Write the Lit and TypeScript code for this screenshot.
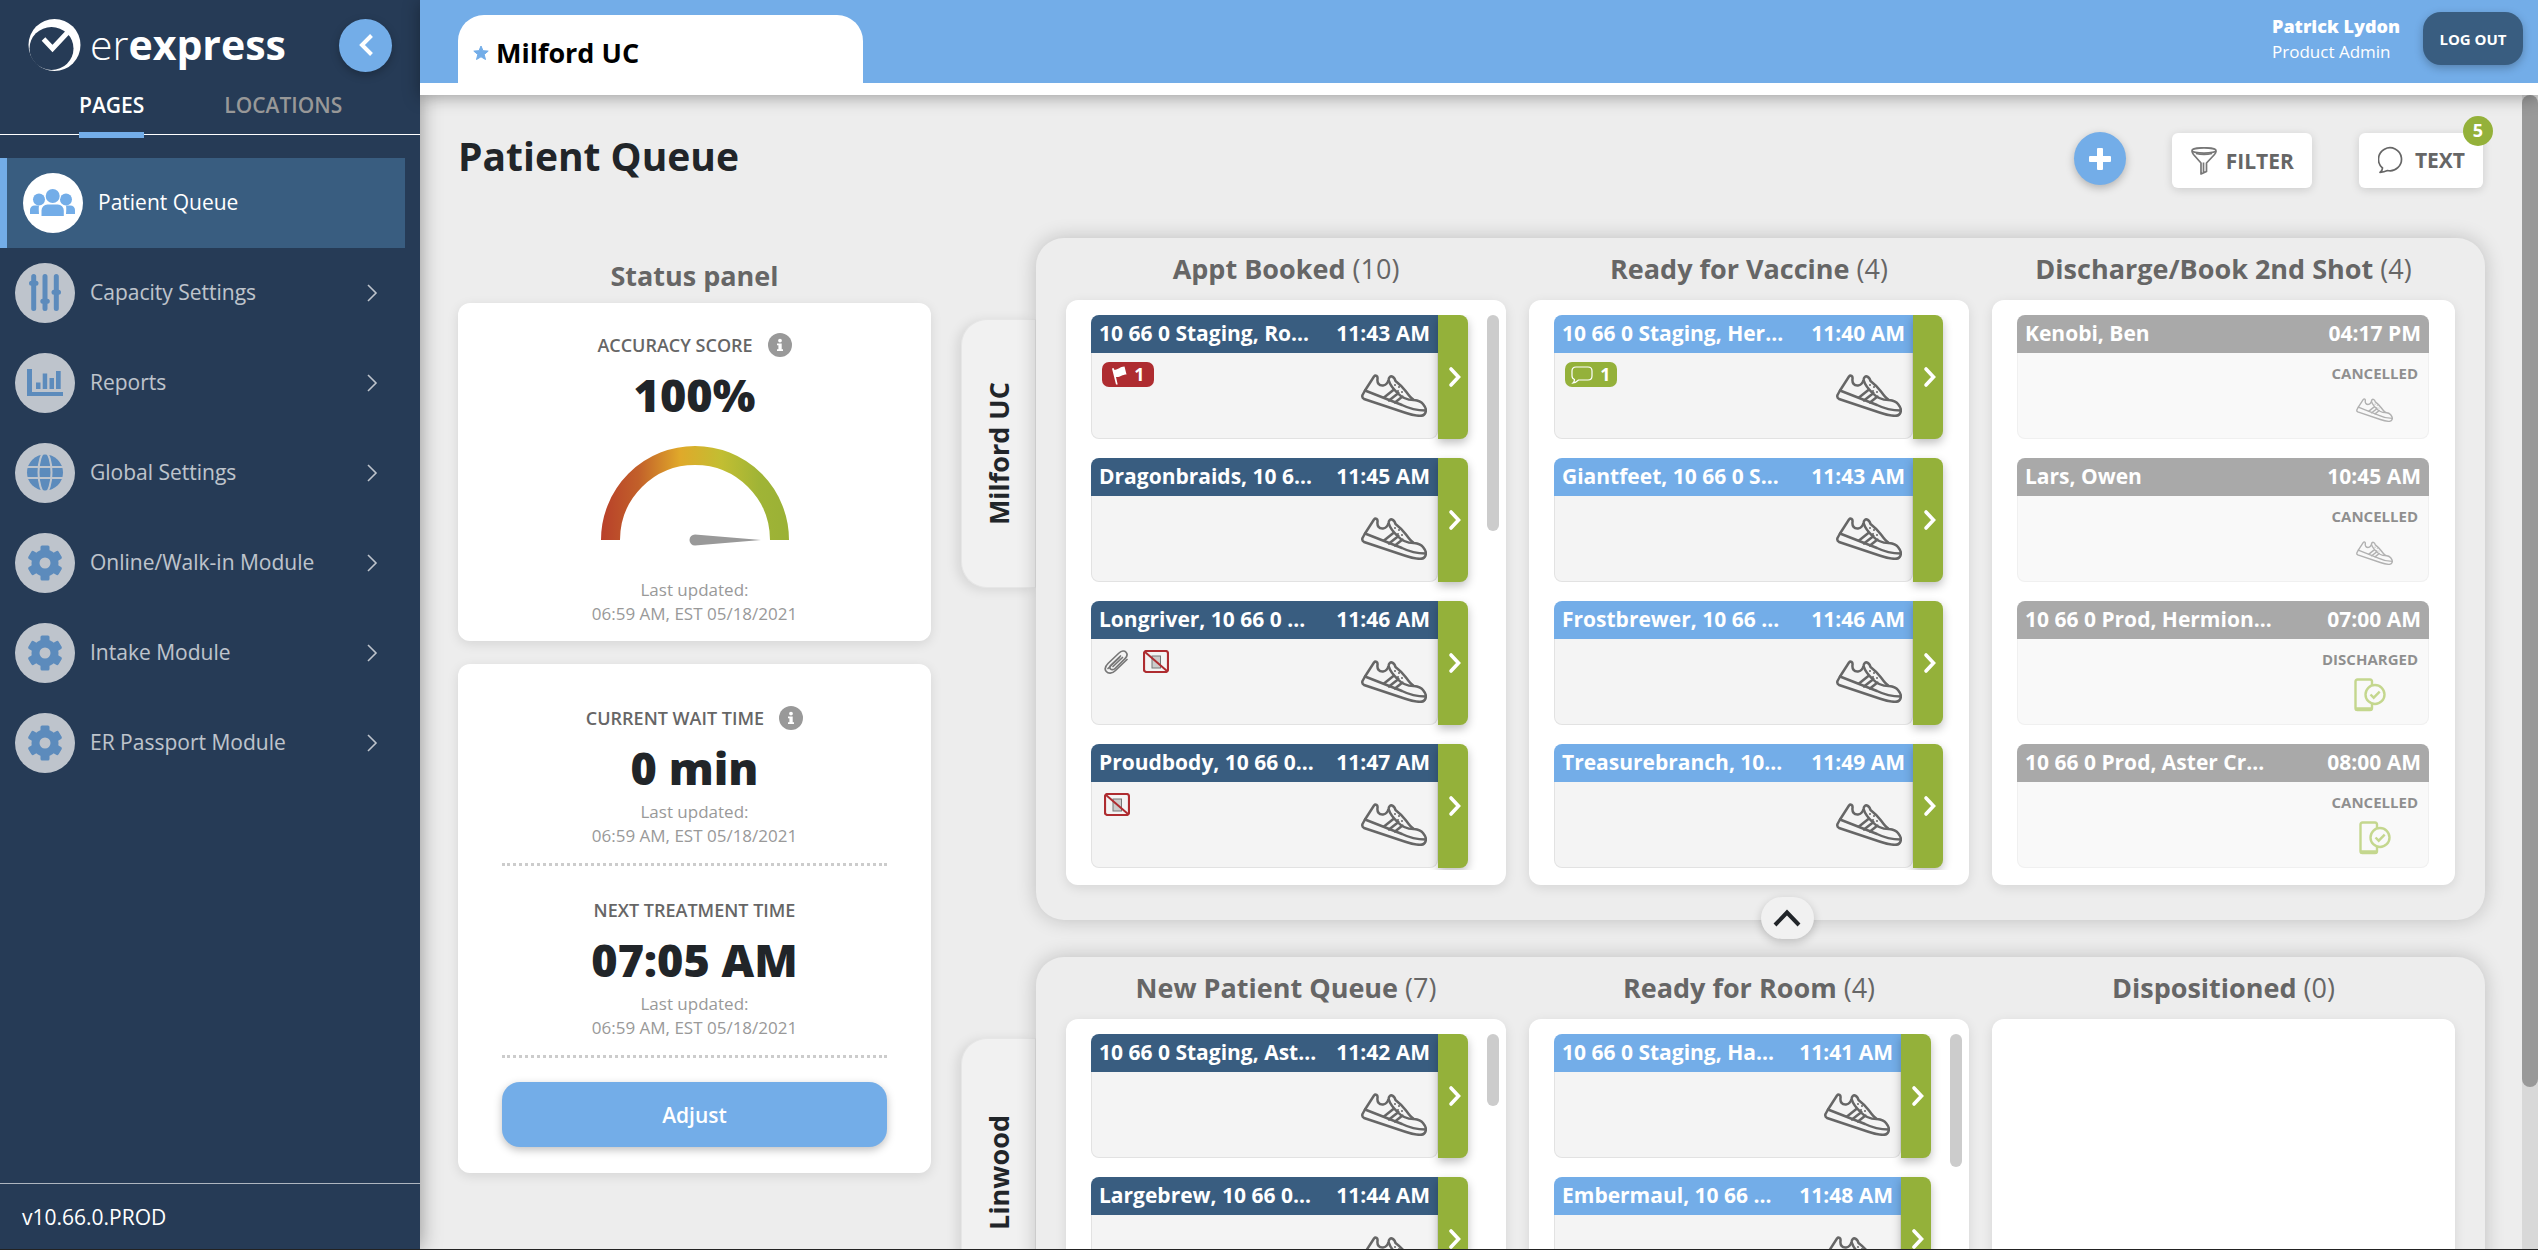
import { LitElement, html, css, svg, nothing } from "lit";
import { customElement, property } from "lit/decorators.js";
import { classMap } from "lit/directives/class-map.js";

type Tone = "navy" | "blue" | "done";

interface Patient {
  name: string;
  time: string;
  flags?: number;
  messages?: number;
  clip?: boolean;
  noPhone?: boolean;
  status?: string;
  icon?: "shoe" | "phone";
}

interface Column {
  title: string;
  count: number;
  tone: Tone;
  thumb?: number;
  patients: Patient[];
}

interface Clinic {
  name: string;
  columns: Column[];
}

const clinics: Clinic[] = [
  {
    name: "Milford UC",
    columns: [
      {
        title: "Appt Booked", count: 10, tone: "navy", thumb: 39,
        patients: [
          { name: "10 66 0 Staging, Ro...", time: "11:43 AM", flags: 1 },
          { name: "Dragonbraids, 10 6...", time: "11:45 AM" },
          { name: "Longriver, 10 66 0 ...", time: "11:46 AM", clip: true, noPhone: true },
          { name: "Proudbody, 10 66 0...", time: "11:47 AM", noPhone: true },
        ],
      },
      {
        title: "Ready for Vaccine", count: 4, tone: "blue",
        patients: [
          { name: "10 66 0 Staging, Her...", time: "11:40 AM", messages: 1 },
          { name: "Giantfeet, 10 66 0 S...", time: "11:43 AM" },
          { name: "Frostbrewer, 10 66 ...", time: "11:46 AM" },
          { name: "Treasurebranch, 10...", time: "11:49 AM" },
        ],
      },
      {
        title: "Discharge/Book 2nd Shot", count: 4, tone: "done",
        patients: [
          { name: "Kenobi, Ben", time: "04:17 PM", status: "CANCELLED", icon: "shoe" },
          { name: "Lars, Owen", time: "10:45 AM", status: "CANCELLED", icon: "shoe" },
          { name: "10 66 0 Prod, Hermion...", time: "07:00 AM", status: "DISCHARGED", icon: "phone" },
          { name: "10 66 0 Prod, Aster Cr...", time: "08:00 AM", status: "CANCELLED", icon: "phone" },
        ],
      },
    ],
  },
  {
    name: "Linwood",
    columns: [
      {
        title: "New Patient Queue", count: 7, tone: "navy", thumb: 13,
        patients: [
          { name: "10 66 0 Staging, Ast...", time: "11:42 AM" },
          { name: "Largebrew, 10 66 0...", time: "11:44 AM" },
        ],
      },
      {
        title: "Ready for Room", count: 4, tone: "blue", thumb: 24,
        patients: [
          { name: "10 66 0 Staging, Ha...", time: "11:41 AM" },
          { name: "Embermaul, 10 66 ...", time: "11:48 AM" },
        ],
      },
      { title: "Dispositioned", count: 0, tone: "done", patients: [] },
    ],
  },
];

const gear = svg`
  <g fill="#73ade8">
    ${[0, 60, 120].map(
      (a) => svg`<rect x="25.5" y="12.5" width="9" height="35" rx="1.5" transform="rotate(${a} 30 30)"></rect>`,
    )}
    <circle cx="30" cy="30" r="13.5"></circle>
  </g>
  <circle cx="30" cy="30" r="5.5" fill="#fff"></circle>`;

const navIcons: Record<string, unknown> = {
  people: svg`
    <g fill="#73ade8">
      <circle cx="16" cy="26.500" r="6"></circle><circle cx="43" cy="26.500" r="6"></circle>
      <path d="M7 41v-4a4.500 4.500 0 0 1 4.500-4.500H16q-.5 2.500 0 8.500zM52 41v-4a4.500 4.500 0 0 0-4.500-4.500H43q.5 2.500 0 8.500z"></path>
      <path d="M18.500 43v-5.500a6 6 0 0 1 6-6h10.300a6 6 0 0 1 6 6V43z" stroke="#fff" stroke-width="3" paint-order="stroke"></path>
      <circle cx="29.700" cy="23" r="7" stroke="#fff" stroke-width="2" paint-order="stroke"></circle>
    </g>`,
  sliders: svg`
    <g stroke="#73ade8" stroke-width="5" stroke-linecap="round">
      <path d="M18.700 13.500v32M30 13.500v32M41.300 13.500v32"></path>
      <path d="M16.500 20.300h4.500M27.800 38.300h4.500M39 29.300h4.500"></path>
    </g>`,
  reports: svg`
    <path fill="#73ade8" d="M12 16h5v23h31v4H12zM21 29.500h4.500V36H21zM27.700 20.500h4.500V36h-4.500zM34.500 25H39v11h-4.500zM41 18h4.700v18H41z"></path>`,
  globe: svg`
    <circle cx="30" cy="29.500" r="18" fill="#73ade8"></circle>
    <g fill="none" stroke="#fff" stroke-width="2">
      <path d="M11 24h38M11 35h38"></path><ellipse cx="30" cy="29.500" rx="6.500" ry="20"></ellipse>
    </g>`,
  gear,
};

const shoe = svg`
  <g fill="none" stroke="currentColor" stroke-width="2.500" stroke-linejoin="round" stroke-linecap="round">
    <path d="M13 2.500C14.500.6 17 2 16.500 5c-.5 4 1.500 6.800 5.500 6.500 3-.3 4.500-2 5.500-5.500C28 3 29.500 2 31 2.500c2 .7 3 2.500 3.500 4.500 4.500 3.500 8 7 10.500 10.500 2.500 3.500 5 7 8 8.500 4 .5 7 1.500 9 4 2.500 3 3.500 6 2.500 8.500-.8 2.500-2.500 3.500-6 3.300-5-.1-9.500-1.300-15-3.300L3 25C1.300 24 1 22.500 1.500 21L4 16.500z"></path>
    <path d="M4 16.500 41 31c7 3.500 13 5.500 23.500 5.500"></path>
    <path d="M28 7c1 4.500 4.500 8 8.500 12 4.500 5 9 7 16 7M33 15.500 23 23.500M37.500 19 28 26.500M41.500 22.500 34 28.500"></path>
  </g>
  <circle cx="34" cy="11" r="1" fill="currentColor"></circle>
  <circle cx="38" cy="13" r="1" fill="currentColor"></circle>
  <circle cx="37" cy="17" r="1" fill="currentColor"></circle>
  <circle cx="41" cy="18" r="1" fill="currentColor"></circle>`;

const base = css`
  * { box-sizing: border-box; }
  button { font: inherit; border: 0; padding: 0; margin: 0; cursor: pointer; }
  a { color: inherit; text-decoration: none; }
  svg { display: block; flex: none; }
  h1, h2, h3, p, ul { margin: 0; padding: 0; list-style: none; }
`;

@customElement("patient-card")
class PatientCard extends LitElement {
  @property({ attribute: false }) patient!: Patient;
  @property() tone: Tone = "navy";

  static styles = [
    base,
    css`
      :host { display: block; }
      .card { display: flex; height: 124px; border-radius: 8px; }
      .main { flex: 1; min-width: 0; display: flex; flex-direction: column; }
      .head {
        display: flex; justify-content: space-between; align-items: center;
        height: 38px; padding: 0 8px 2px; border-radius: 8px 0 0 0;
        color: #fff; font-size: 21px; font-weight: 700; white-space: nowrap;
      }
      .navy .head { background: #395d80; }
      .blue .head { background: #73ade8; }
      .body {
        flex: 1; display: flex; justify-content: space-between;
        padding: 9px 10px 0; background: #f4f4f4;
        border: 1px solid #e2e2e2; border-top: 0; border-radius: 0 0 8px 8px;
      }
      .marks { display: flex; align-items: flex-start; gap: 12px; }
      .badge {
        display: flex; align-items: center; justify-content: center; gap: 7px;
        width: 52px; height: 25px; border-radius: 7px; color: #fff;
        font-size: 18px; font-weight: 700; line-height: 25px;
      }
      .red { background: #ae2c30; }
      .green { background: #94b13a; }
      .mark { margin: 2px 0 0 2px; }
      .walk { color: #666; padding-top: 12px; }
      .next {
        display: flex; align-items: center; justify-content: center; width: 30px; padding-left: 3px;
        background: #94b13a; border-radius: 0 8px 8px 0;
        box-shadow: 0 4px 10px rgba(0, 0, 0, 0.25);
      }
      .done { opacity: 0.5; }
      .done .head { background: #555; border-radius: 8px 8px 0 0; }
      .result {
        margin-left: auto; display: flex; flex-direction: column; align-items: center;
        color: #222; font-size: 15px; font-weight: 700; line-height: 22px;
      }
      .done .walk { color: #666; padding-top: 14px; }
      .phone { padding-top: 8px; }
    `,
  ];

  render() {
    const p = this.patient;
    const done = this.tone === "done";
    return html`
      <article class=${classMap({ card: true, [this.tone]: true })}>
        <div class="main">
          <div class="head"><span>${p.name}</span><time>${p.time}</time></div>
          <div class="body">
            <div class="marks">
              ${p.flags
                ? html`<span class="badge red">
                    <svg width="16" height="20" viewBox="0 0 16 20" fill="#fff"><path d="M1 3.500 2.600 3l.6 1.800C7 5 9 1.500 13.500 1.500L15.500 9.500C11 9.500 9 12.500 5 12l1.700 7.500H5z"></path></svg>
                    ${p.flags}</span>`
                : nothing}
              ${p.messages
                ? html`<span class="badge green">
                    <svg width="22" height="18" viewBox="0 0 22 18" fill="none" stroke="#fff" stroke-width="1.200"><path d="M5 1h12q4 0 4 4v5q0 4-4 4H7.500Q5 16.500 2 17q1.500-1.500 1.500-3.500Q1 12.500 1 10V5q0-4 4-4z"></path></svg>
                    ${p.messages}</span>`
                : nothing}
              ${p.clip
                ? html`<svg class="mark" width="25" height="24" viewBox="0 0 25 24" fill="none" stroke="#777" stroke-width="1.700" stroke-linecap="round"><path d="M23 9.500 11.500 20.500C8 24 4 23.500 2.300 21.500S1 16.500 4 13.500L15 3c2.500-2.500 5.500-2.500 7-.8s1.500 4-1 6.500L11 18.500c-1.500 1.500-3.500 1.500-4.500.5s-1-2.500.5-4L16.500 6"></path><path d="M4 18.500 15.500 7.500M9 16.500l9.500-9"></path></svg>`
                : nothing}
              ${p.noPhone
                ? html`<svg class="mark" width="26" height="23" viewBox="0 0 26 23" fill="none"><rect x="9" y="6" width="8.500" height="12" fill="#ccc" stroke="#777"></rect><rect x="1" y="1" width="24" height="21" rx="2.500" stroke="#ae2c30" stroke-width="2.200"></rect><path d="m2 2 22 19" stroke="#ae2c30" stroke-width="2"></path></svg>`
                : nothing}
            </div>
            ${done
              ? html`<div class="result">
                  <span>${p.status}</span>
                  ${p.icon === "phone"
                    ? html`<span class="phone"><svg width="32" height="34" viewBox="0 0 32 34" fill="none" stroke="#8bb01f" stroke-width="2.400"><path d="M18 7V3.500Q18 1.500 16 1.500H3.500Q1.500 1.500 1.500 3.500V30q0 2 2 2H16q2 0 2-2v-5"></path><path d="M1.500 31h16.500" stroke-width="3.500"></path><circle cx="21" cy="16.500" r="9.500"></circle><path d="m16.500 16.500 3.200 3.200 6-6"></path></svg></span>`
                    : html`<span class="walk"><svg width="37" height="24" viewBox="0 0 66 43">${shoe}</svg></span>`}
                </div>`
              : html`<span class="walk"><svg width="66" height="43" viewBox="0 0 66 43">${shoe}</svg></span>`}
          </div>
        </div>
        ${done
          ? nothing
          : html`<button class="next" aria-label="Move ${p.name} forward">
              <svg width="16" height="22" viewBox="0 0 16 22" fill="none" stroke="#fff" stroke-width="3.600" stroke-linecap="round"><path d="m4 3 7.500 8L4 19"></path></svg>
            </button>`}
      </article>
    `;
  }
}

@customElement("clinic-board")
class ClinicBoard extends LitElement {
  @property({ attribute: false }) clinic!: Clinic;

  static styles = [
    base,
    css`
      :host { display: flex; align-items: flex-start; }
      .tab {
        display: flex; align-items: center; justify-content: center;
        flex: none; width: 75px; height: 269px; margin-top: 81px;
        background: #f1f1f1; border: 1px solid #e6e6e6; border-right-color: #e2e2e2;
        border-radius: 26px 0 0 26px; box-shadow: -4px 2px 12px rgba(0, 0, 0, 0.1);
        color: #212529; font-size: 27px; font-weight: 700;
      }
      .tab span { writing-mode: vertical-rl; transform: rotate(180deg); }
      .board {
        flex: 1; min-width: 0; position: relative;
        display: grid; grid-template-columns: 440fr 440fr 463fr; gap: 0 23px;
        padding: 0 30px 35px; border-radius: 28px; background: #ededed;
        box-shadow: 0 0 20px rgba(0, 0, 0, 0.2);
      }
      .column { display: flex; flex-direction: column; min-width: 0; }
      .title {
        color: #666; font-size: 27px; font-weight: 700; line-height: 62px;
        text-align: center; white-space: nowrap;
      }
      .count { font-weight: 400; }
      .tray {
        display: flex; height: 585px; padding: 15px 0 15px 25px;
        background: #fff; border-radius: 12px; box-shadow: 0 3px 12px rgba(0, 0, 0, 0.1);
      }
      .list {
        flex: 1; min-width: 0; display: flex; flex-direction: column; gap: 19px;
        padding-right: 26px; overflow: hidden;
      }
      .scrolls .list { padding-right: 19px; }
      .track { width: 12px; margin-right: 7px; }
      .thumb { border-radius: 6px; background: #ccc; }
      .fold {
        position: absolute; left: 50%; bottom: -19px; width: 53px; height: 42px;
        display: flex; align-items: center; justify-content: center;
        border-radius: 21px; background: #f1f1f1; box-shadow: 0 3px 10px rgba(0, 0, 0, 0.2);
      }
    `,
  ];

  render() {
    return html`
      <h2 class="tab"><span>${this.clinic.name}</span></h2>
      <section class="board">
        ${this.clinic.columns.map(
          (c) => html`
            <div class="column">
              <h3 class="title">${c.title} <span class="count">(${c.count})</span></h3>
              <div class=${classMap({ tray: true, scrolls: !!c.thumb })}>
                <div class="list">
                  ${c.patients.map((p) => html`<patient-card .patient=${p} .tone=${c.tone}></patient-card>`)}
                </div>
                ${c.thumb
                  ? html`<div class="track"><div class="thumb" style="height:${c.thumb}%"></div></div>`
                  : nothing}
              </div>
            </div>
          `,
        )}
        <button class="fold" aria-label="Collapse ${this.clinic.name}">
          <svg width="28" height="20" viewBox="0 0 28 20" fill="none" stroke="#212529" stroke-width="4"><path d="M2 17 14 4.500 26 17"></path></svg>
        </button>
      </section>
    `;
  }
}

@customElement("side-nav")
class SideNav extends LitElement {
  static styles = [
    base,
    css`
      :host {
        display: flex; flex-direction: column; background: #263b56; color: #fff;
        box-shadow: 0 0 20px rgba(0, 0, 0, 0.4); font-size: 21px;
      }
      .brand { display: flex; align-items: center; height: 90px; padding: 0 28px; }
      .word { margin-left: 9px; padding-bottom: 3px; font-size: 41px; line-height: 52px; font-weight: 300; }
      .word b { font-weight: 700; }
      .hide {
        width: 53px; height: 53px; margin-left: auto; border-radius: 50%;
        display: flex; align-items: center; justify-content: center;
        background: #73ade8; box-shadow: 0 3px 8px rgba(0, 0, 0, 0.25);
      }
      .tabs { display: flex; gap: 80px; padding-left: 79px; height: 45px; border-bottom: 1px solid #fff; }
      .pick {
        height: 48px; padding-bottom: 18px; background: none; line-height: 30px;
        color: #989898; font-weight: 600; border-bottom: 6px solid transparent;
      }
      .pick.on { color: #fff; border-bottom-color: #73ade8; }
      .nav { padding-top: 23px; }
      .item { display: flex; align-items: center; height: 90px; padding: 0 42px 0 15px; gap: 15px; opacity: 0.7; }
      .item.on { margin-right: 15px; padding-left: 16px; border-left: 7px solid #73ade8; background: #395d80; opacity: 1; }
      .name { padding-bottom: 2px; }
      .disc { width: 60px; height: 60px; border-radius: 50%; background: #fff; }
      .go { margin-left: auto; }
      .version { margin-top: auto; height: 66px; padding-left: 22px; border-top: 1px solid #aeb6c0; line-height: 66px; }
    `,
  ];

  private items: [string, string][] = [
    ["people", "Patient Queue"],
    ["sliders", "Capacity Settings"],
    ["reports", "Reports"],
    ["globe", "Global Settings"],
    ["gear", "Online/Walk-in Module"],
    ["gear", "Intake Module"],
    ["gear", "ER Passport Module"],
  ];

  render() {
    return html`
      <div class="brand">
        <svg width="53" height="53" viewBox="0 0 53 53">
          <circle cx="26.500" cy="26" r="26" fill="#fff"></circle>
          <ellipse cx="23.500" cy="29.500" rx="22" ry="21.500" fill="#263b56"></ellipse>
          <path d="M15.500 20 24.500 29.500 40 13" fill="none" stroke="#fff" stroke-width="5"></path>
        </svg>
        <span class="word">er<b>express</b></span>
        <button class="hide" aria-label="Collapse menu">
          <svg width="16" height="22" viewBox="0 0 16 22" fill="none" stroke="#fff" stroke-width="4"><path d="M13.500 1.500 4 11l9.500 9.500"></path></svg>
        </button>
      </div>
      <div class="tabs">
        <button class="pick on">PAGES</button>
        <button class="pick">LOCATIONS</button>
      </div>
      <nav class="nav">
        ${this.items.map(
          ([icon, label], i) => html`
            <a href="#" class=${classMap({ item: true, on: i === 0 })}>
              <svg class="disc" viewBox="0 0 60 60">${navIcons[icon]}</svg>
              <span class="name">${label}</span>
              ${i === 0
                ? nothing
                : html`<svg class="go" width="12" height="18" viewBox="0 0 12 18" fill="none" stroke="#fff" stroke-width="1.600"><path d="m2 1 8 8-8 8"></path></svg>`}
            </a>
          `,
        )}
      </nav>
      <div class="version">v10.66.0.PROD</div>
    `;
  }
}

@customElement("status-panel")
class StatusPanel extends LitElement {
  static styles = [
    base,
    css`
      :host { display: block; text-align: center; color: #212529; }
      .title { margin-top: 11px; color: #666; font-size: 27px; font-weight: 700; line-height: 54px; }
      .card {
        display: flex; flex-direction: column; align-items: stretch; margin-bottom: 23px;
        padding: 24px 44px 15px; background: #fff; border-radius: 12px;
        box-shadow: 0 3px 12px rgba(0, 0, 0, 0.1);
      }
      .times { padding: 36px 44px 26px; }
      .label {
        display: flex; justify-content: center; align-items: center; gap: 15px;
        color: #666; font-size: 18px; font-weight: 600; line-height: 36px;
      }
      .value { font-size: 45px; font-weight: 800; line-height: 64px; }
      .gauge { margin: 19px auto 0; }
      .stamp { color: #999; font-size: 17px; line-height: 24px; }
      .after { margin-top: 32px; }
      .rule { height: 3px; margin: 15px 0 26px; border-bottom: 3px dotted #ccc; }
      .last { margin-bottom: 24px; }
      .adjust {
        height: 65px; border-radius: 18px; background: #73ade8; color: #fff;
        font-size: 21px; font-weight: 600; box-shadow: 0 3px 8px rgba(0, 0, 0, 0.25);
      }
    `,
  ];

  private info = html`<svg width="24" height="24" viewBox="0 0 24 24"><circle cx="12" cy="12" r="12" fill="#999"></circle><path fill="#fff" d="M12 5.700a1.900 1.900 0 1 1 0 3.800 1.900 1.900 0 0 1 0-3.800M9 10.500h4.700v5.700H15V18H9v-1.800h1.400v-3.900H9z"></path></svg>`;

  private stamp = html`<p class="stamp">Last updated:<br />06:59 AM, EST 05/18/2021</p>`;

  render() {
    return html`
      <h2 class="title">Status panel</h2>
      <section class="card">
        <div class="label"><span>ACCURACY SCORE</span>${this.info}</div>
        <div class="value">100%</div>
        <svg class="gauge" width="188" height="100" viewBox="0 0 188 100">
          <defs>
            <linearGradient id="scale" gradientUnits="userSpaceOnUse" x1="0" x2="188" y1="0" y2="0">
              <stop offset="0" stop-color="#b8402a"></stop>
              <stop offset=".2" stop-color="#c2602a"></stop>
              <stop offset=".42" stop-color="#e0a92a"></stop>
              <stop offset=".64" stop-color="#c2be32"></stop>
              <stop offset=".84" stop-color="#a0b436"></stop>
              <stop offset="1" stop-color="#9ab136"></stop>
            </linearGradient>
          </defs>
          <path d="M9.500 94a84.500 84.500 0 0 1 169 0" fill="none" stroke="url(#scale)" stroke-width="19"></path>
          <path d="M94 88.500 160 94 94 99.500a5.500 5.500 0 0 1 0-11z" fill="#999"></path>
        </svg>
        <div class="after">${this.stamp}</div>
      </section>
      <section class="card times">
        <div class="label"><span>CURRENT WAIT TIME</span>${this.info}</div>
        <div class="value">0 min</div>
        ${this.stamp}
        <div class="rule"></div>
        <div class="label">NEXT TREATMENT TIME</div>
        <div class="value">07:05 AM</div>
        ${this.stamp}
        <div class="rule last"></div>
        <button class="adjust">Adjust</button>
      </section>
    `;
  }
}

@customElement("app-root")
class AppRoot extends LitElement {
  static styles = [
    base,
    css`
      :host {
        display: grid; grid-template-columns: 420px minmax(0, 1fr); height: 100vh; overflow: hidden;
        font-family: "Open Sans", "Noto Sans", sans-serif; color: #212529;
        background: #ededed; border-bottom: 1px solid #222; box-sizing: border-box;
      }
      side-nav { z-index: 2; }
      .page { display: flex; flex-direction: column; min-width: 0; min-height: 0; }
      .top {
        display: flex; align-items: flex-end; flex: none; height: 95px; padding: 0 15px 0 38px;
        background: #73ade8; border-bottom: 12px solid #fff; z-index: 3;
        box-shadow: 0 2px 16px rgba(0, 0, 0, 0.35);
      }
      .place {
        display: flex; align-items: center; gap: 7px; width: 405px; height: 68px; padding: 7px 15px 0;
        border-radius: 26px 26px 0 0; background: #fff; color: #000; font-size: 27px; font-weight: 700;
      }
      .who { margin: 0 23px 19px auto; color: #fff; font-size: 17px; line-height: 25px; }
      .who b { display: block; font-size: 18px; font-weight: 800; }
      .out {
        width: 100px; height: 53px; margin-bottom: 18px; border-radius: 18px; background: #395d80; color: #fff;
        font-size: 15px; font-weight: 700; box-shadow: 0 3px 8px rgba(0, 0, 0, 0.25);
      }
      .view { flex: 1; min-height: 0; display: flex; }
      .content { flex: 1; min-width: 0; padding: 37px 37px 0 38px; overflow: hidden; }
      .bar { width: 16px; background: #d8d8d8; }
      .thumb { height: 86%; border-radius: 8px; background: #999; }
      .tools { display: flex; align-items: center; height: 56px; margin-bottom: 50px; }
      .tools h1 { margin: 0 auto 10px 0; font-size: 39px; font-weight: 700; }
      .add {
        width: 52px; height: 53px; margin: 0 46px 3px 0; border-radius: 50%; background: #73ade8;
        display: flex; align-items: center; justify-content: center; box-shadow: 0 3px 8px rgba(0, 0, 0, 0.25);
      }
      .tool {
        position: relative; display: flex; align-items: center; height: 55px; gap: 9px; padding: 2px 18px 0 19px;
        border-radius: 6px; background: #fff; color: #666; font-size: 21px; font-weight: 700;
        box-shadow: 0 2px 10px rgba(0, 0, 0, 0.14);
      }
      .text { margin: 0 2px 0 47px; gap: 11px; padding: 0 18px 0 19px; }
      .alert {
        position: absolute; top: -17px; right: -10px; width: 30px; height: 30px; border-radius: 50%;
        background: #94b13a; color: #fff; font-size: 18px; line-height: 28px;
      }
      .work { display: grid; grid-template-columns: 473fr 1524fr; gap: 30px; }
      .boards { display: flex; flex-direction: column; gap: 37px; min-width: 0; }
    `,
  ];

  render() {
    return html`
      <side-nav></side-nav>
      <div class="page">
        <header class="top">
          <div class="place">
            <svg width="16" height="16" viewBox="0 0 16 16" fill="#73ade8"><path stroke="#73ade8" stroke-linejoin="round" d="m8 1 2 4.700 5.200.4-4 3.400 1.300 5L8 11.800l-4.500 2.700 1.300-5-4-3.400L6 5.700z"></path></svg>
            <span>Milford UC</span>
          </div>
          <div class="who"><b>Patrick Lydon</b>Product Admin</div>
          <button class="out">LOG OUT</button>
        </header>
        <div class="view">
          <main class="content">
            <div class="tools">
              <h1>Patient Queue</h1>
              <button class="add" aria-label="Add patient">
                <svg width="22" height="22" viewBox="0 0 22 22" fill="#fff"><path d="M9 0h4q1 0 1 1v7h7q1 0 1 1v4q0 1-1 1h-7v7q0 1-1 1H9q-1 0-1-1v-7H1q-1 0-1-1V9q0-1 1-1h7V1q0-1 1-1z"></path></svg>
              </button>
              <button class="tool">
                <svg width="26" height="28" viewBox="0 0 26 28" fill="none" stroke="#777" stroke-width="1.700" stroke-linejoin="round"><ellipse cx="13" cy="3.500" rx="12" ry="2.700"></ellipse><path d="M1 4q.3 2 1.500 3.500L10 16v11l5.500-2.500V16l8-8.500Q25 6 25 4M5 6.500q8 2 16 0M12.500 26V15.500"></path></svg>
                FILTER
              </button>
              <button class="tool text">
                <svg width="26" height="28" viewBox="0 0 26 28" fill="none" stroke="#666" stroke-width="1.700" stroke-linejoin="round"><path d="M4.500 22A11.500 11.500 0 1 1 9.500 24.500Q6 26 2 26.500 4.500 24.500 4.500 22z"></path></svg>
                TEXT
                <span class="alert">5</span>
              </button>
            </div>
            <div class="work">
              <status-panel></status-panel>
              <div class="boards">
                ${clinics.map((c) => html`<clinic-board .clinic=${c}></clinic-board>`)}
              </div>
            </div>
          </main>
          <div class="bar"><div class="thumb"></div></div>
        </div>
      </div>
    `;
  }
}
